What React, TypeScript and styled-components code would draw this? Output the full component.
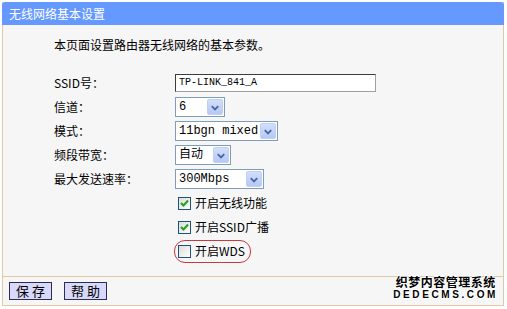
import styled, { createGlobalStyle } from "styled-components";
import React from "react";

const GlobalStyle = createGlobalStyle`
  html, body {
    margin: 0;
    padding: 0;
    background: #ffffff;
  }
  body {
    font-family: "Noto Sans CJK SC", "Liberation Sans", sans-serif;
    font-size: 12px;
    color: #000000;
  }
`;

interface SelectProps {
  value: string;
  width: number;
}

const FakeSelect = ({ value, width }: SelectProps) => {
  return (
    <SelectBox $width={width}>
      <SelectText>{value}</SelectText>
      <DropButton>
        <svg width="15" height="15" viewBox="0 0 15 15">
          <path d="M4 6 L7.5 9.5 L11 6" fill="none" stroke="#4a64a8" strokeWidth="2" />
        </svg>
      </DropButton>
    </SelectBox>
  );
};

interface CheckProps {
  checked: boolean;
  label: string;
}

const Check = ({ checked, label }: CheckProps) => {
  return (
    <CheckItem>
      <CheckBox>
        {checked && (
          <svg width="11" height="11" viewBox="0 0 11 11">
            <path d="M2 5 L4.5 7.5 L9 2.5" fill="none" stroke="#21a121" strokeWidth="2" />
          </svg>
        )}
      </CheckBox>
      <CheckLabel>{label}</CheckLabel>
    </CheckItem>
  );
};

const App = () => {
  return (
    <Page>
      <GlobalStyle />
      <Frame>
        <TitleBar>无线网络基本设置</TitleBar>
        <Content>
          <Intro>本页面设置路由器无线网络的基本参数。</Intro>
          <Form>
            <Label>SSID号：</Label>
            <Control>
              <TextInput>TP-LINK_841_A</TextInput>
            </Control>
            <Label>信道：</Label>
            <Control>
              <FakeSelect value="6" width={50} />
            </Control>
            <Label>模式：</Label>
            <Control>
              <FakeSelect value="11bgn mixed" width={103} />
            </Control>
            <Label>频段带宽：</Label>
            <Control>
              <FakeSelect value="自动" width={56} />
            </Control>
            <Label>最大发送速率：</Label>
            <Control>
              <FakeSelect value="300Mbps" width={89} />
            </Control>
            <Label />
            <Control>
              <Check checked={true} label="开启无线功能" />
            </Control>
            <Label />
            <Control>
              <Check checked={true} label="开启SSID广播" />
            </Control>
            <Label />
            <Control>
              <Highlight>
                <Check checked={false} label="开启WDS" />
              </Highlight>
            </Control>
          </Form>
        </Content>
        <ButtonBar>
          <Button>保 存</Button>
          <Button>帮 助</Button>
        </ButtonBar>
        <Watermark>
          <WatermarkTop>织梦内容管理系统</WatermarkTop>
          <WatermarkBottom>DEDECMS.COM</WatermarkBottom>
        </Watermark>
      </Frame>
    </Page>
  );
};

const Page = styled.div`
  width: 507px;
  height: 309px;
  padding: 2px 0 0 2px;
  box-sizing: border-box;
`;

const Frame = styled.div`
  position: relative;
  width: 502px;
  display: flex;
  flex-direction: column;
  border: 1px solid #e2c9a4;
  border-top: none;
  box-sizing: border-box;
  background: #f6f6f6;
`;

const TitleBar = styled.div`
  height: 23px;
  margin: 0 -1px;
  background: #6699ff;
  color: #ffffff;
  font-size: 12px;
  line-height: 23px;
  padding-left: 7px;
  border-radius: 3px 3px 0 0;
`;

const Content = styled.div`
  display: flex;
  flex-direction: column;
  padding: 12px 0 13px 51px;
  border-bottom: 1px solid #e2c9a4;
`;

const Intro = styled.div`
  line-height: 16px;
  height: 16px;
  margin-bottom: 18px;
`;

const Form = styled.div`
  display: grid;
  grid-template-columns: 121px 1fr;
  grid-auto-rows: 24px;
  align-items: center;
`;

const Label = styled.div`
  line-height: 16px;
`;

const Control = styled.div`
  display: flex;
  align-items: center;
`;

const TextInput = styled.div`
  width: 201px;
  height: 18px;
  box-sizing: border-box;
  border: 1px solid #3c3c3c;
  border-right-color: #a0a0a0;
  border-bottom-color: #a0a0a0;
  background: #ffffff;
  font-family: "Liberation Mono", monospace;
  font-size: 10px;
  line-height: 16px;
  padding-left: 3px;
`;

const SelectBox = styled.div<{ $width: number }>`
  width: ${(props) => props.$width}px;
  height: 20px;
  box-sizing: border-box;
  border: 1px solid #7f9db9;
  background: #ffffff;
  display: flex;
  align-items: center;
  justify-content: space-between;
  padding: 1px;
`;

const SelectText = styled.div`
  font-family: "Liberation Mono", "Noto Sans CJK SC", monospace;
  font-size: 12px;
  line-height: 16px;
  padding-left: 2px;
  white-space: nowrap;
`;

const DropButton = styled.div`
  width: 16px;
  height: 16px;
  box-sizing: border-box;
  border: 1px solid #bfd0f4;
  border-radius: 2px;
  background: linear-gradient(#d2defa, #b6c9f5);
  display: flex;
  align-items: center;
  justify-content: center;
`;

const CheckItem = styled.div`
  display: flex;
  align-items: center;
  margin-left: 3px;
`;

const CheckBox = styled.div`
  width: 13px;
  height: 13px;
  box-sizing: border-box;
  border: 1px solid #1c5180;
  background: linear-gradient(135deg, #dcdcd7, #ffffff);
  display: flex;
  align-items: center;
  justify-content: center;
`;

const CheckLabel = styled.div`
  margin-left: 4px;
  line-height: 16px;
`;

const Highlight = styled.div`
  display: flex;
  align-items: center;
  height: 23px;
  box-sizing: border-box;
  margin-left: -1px;
  padding-right: 5px;
  border: 1px solid #c8383c;
  border-radius: 11px;
`;

const ButtonBar = styled.div`
  height: 28px;
  display: flex;
  align-items: center;
  gap: 12px;
  padding-left: 6px;
`;

const Button = styled.div`
  width: 43px;
  height: 18px;
  box-sizing: border-box;
  border: 1px solid #2c2c54;
  background: #d8d8f8;
  font-size: 13px;
  line-height: 16px;
  text-align: center;
  white-space: pre;
`;

const Watermark = styled.div`
  position: absolute;
  right: 5px;
  bottom: 5px;
  display: flex;
  flex-direction: column;
  align-items: center;
  text-shadow:
    1px 0 0 #fff,
    -1px 0 0 #fff,
    0 1px 0 #fff,
    0 -1px 0 #fff;
`;

const WatermarkTop = styled.div`
  font-size: 12px;
  font-weight: bold;
  line-height: 14px;
  letter-spacing: 0.5px;
`;

const WatermarkBottom = styled.div`
  font-family: "Liberation Sans", sans-serif;
  font-size: 10px;
  font-weight: bold;
  line-height: 11px;
  letter-spacing: 2.6px;
`;

export default App;
